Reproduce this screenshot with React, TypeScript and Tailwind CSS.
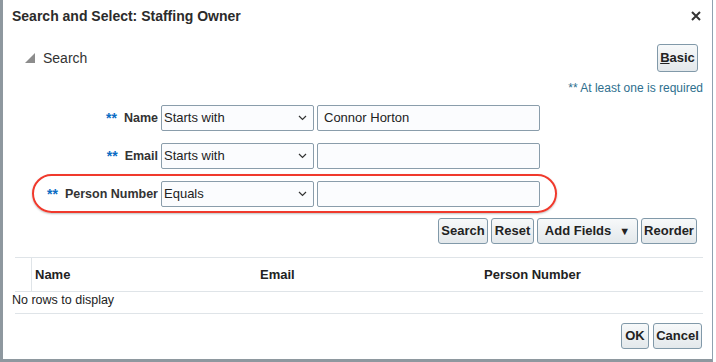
import { ReactNode } from 'react'

function Btn({ children, className = '' }: { children: ReactNode; className?: string }) {
    return (
        <button
            className={`h-[26px] px-[4px] rounded-[3px] border border-[#8199a9] bg-gradient-to-b from-[#f7f9fa] to-[#e3e8eb] text-[13px] font-bold text-[#222] flex items-center justify-center ${className}`}
        >
            {children}
        </button>
    )
}

function Chevron() {
    return (
        <svg width="9" height="6" viewBox="0 0 9 6" className="shrink-0">
            <path d="M1 1l3.5 3.5L8 1" fill="none" stroke="#333" strokeWidth="1.2" />
        </svg>
    )
}

function FieldRow({ label, op, value }: { label: string; op: string; value?: string }) {
    return (
        <div className="flex items-center h-[26px]">
            <div className="w-[158px] flex justify-end items-center gap-[7px] pr-[3px]">
                <span className="text-[#0a6cc4] font-bold text-[14px] leading-none">**</span>
                <span className="text-[#333] font-bold text-[12.5px]">{label}</span>
            </div>
            <div className="w-[153px] h-[26px] border border-[#8a9dab] rounded-[2px] bg-[#fbfcfe] flex items-center justify-between pl-[2px] pr-[6px] text-[13px] text-[#222]">
                <span>{op}</span>
                <Chevron />
            </div>
            <div className="ml-[3px] w-[223px] h-[26px] border border-[#8a9dab] rounded-[2px] bg-[#fbfcfe] flex items-center pl-[6px] text-[13px] text-[#222]">
                {value}
            </div>
        </div>
    )
}

export default function App() {
    return (
        <div className="w-[716px] h-[362px] bg-white overflow-hidden flex" style={{ fontFamily: '"Liberation Sans", Arial, sans-serif' }}>
            <div className="w-[713px] h-[362px] flex flex-col border-l-[3px] border-r border-b-[3px] border-l-[#8e989f] border-r-[#8fa2b0] border-b-[#8e989f]">
                {/* title bar */}
                <div className="h-[32px] flex items-center justify-between pl-[9px] pr-[11px]">
                    <span className="text-[14px] font-bold text-[#2b2b2b]">Search and Select: Staffing Owner</span>
                    <svg width="10" height="10" viewBox="0 0 10 10">
                        <path d="M1 1l8 8M9 1L1 9" stroke="#333" strokeWidth="2" />
                    </svg>
                </div>

                {/* search header */}
                <div className="mt-[12px] h-[28px] flex items-center justify-between pl-[22px] pr-[14px]">
                    <div className="flex items-center gap-[7px]">
                        <svg width="11" height="11" viewBox="0 0 11 11">
                            <polygon points="10,0 10,10 0,10" fill="#8c8c8c" />
                        </svg>
                        <span className="text-[14px] text-[#333]">Search</span>
                    </div>
                    <Btn className="w-[41px] h-[28px]">
                        <span><span className="underline">B</span>asic</span>
                    </Btn>
                </div>

                <div className="mt-[9px] pr-[9px] text-right text-[12px] text-[#2e6f8e] leading-[14px]">
                    ** At least one is required
                </div>

                {/* form */}
                <div className="relative mt-[10px] flex flex-col gap-[12px]">
                    <FieldRow label="Name" op="Starts with" value="Connor Horton" />
                    <FieldRow label="Email" op="Starts with" />
                    <FieldRow label="Person Number" op="Equals" />
                    <div className="absolute left-[29px] top-[69px] w-[525px] h-[39px] rounded-[20px] border-2 border-[#f0392c] shadow-[0_1px_2px_rgba(0,0,0,0.25)]" />
                </div>

                {/* action buttons */}
                <div className="mt-[11px] flex justify-end gap-[3px] pr-[15px]">
                    <Btn className="w-[50px]">Search</Btn>
                    <Btn className="w-[43px]">Reset</Btn>
                    <Btn className="w-[101px] gap-[8px]">
                        <span>Add Fields</span>
                        <span className="text-[11px]">▼</span>
                    </Btn>
                    <Btn className="w-[56px]">Reorder</Btn>
                </div>

                {/* results table */}
                <div className="mt-[13px] ml-[12px] mr-[9px] border-t border-[#dfe4e8]">
                    <div className="h-[34px] flex items-stretch border-b border-[#dfe4e8] text-[13px] font-bold text-[#222]">
                        <div className="w-[17px] border-r border-[#dfe4e8]" />
                        <div className="w-[226px] pl-[3px] flex items-center">Name</div>
                        <div className="w-[224px] pl-[2px] flex items-center">Email</div>
                        <div className="flex-1 pl-[2px] flex items-center">Person Number</div>
                    </div>
                </div>
                <div className="pl-[9px] mt-[1px] text-[12.5px] text-[#222] leading-[14px]">No rows to display</div>
                <div className="mt-[6px] ml-[12px] mr-[9px] border-t border-[#dfe4e8]" />

                {/* footer */}
                <div className="mt-[9px] flex justify-end gap-[4px] pr-[10px]">
                    <Btn className="w-[28px]">OK</Btn>
                    <Btn className="w-[49px]">Cancel</Btn>
                </div>
            </div>
        </div>
    )
}
